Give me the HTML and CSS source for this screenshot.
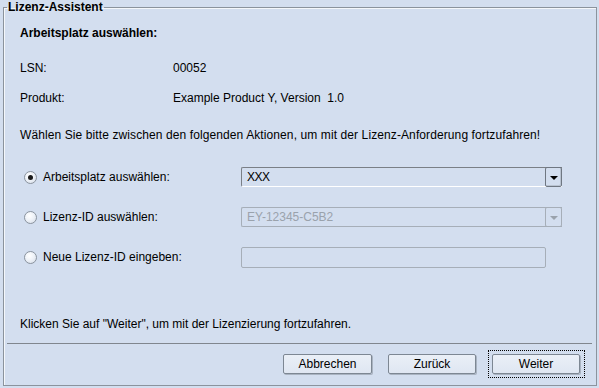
FILE: index.html
```html
<!DOCTYPE html>
<html lang="de">
<head>
  <meta charset="UTF-8" />
  <title>Lizenz-Assistent</title>
  <link rel="stylesheet" href="styles.css">
</head>
<body>

  <fieldset class="wizard">
    <legend>Lizenz-Assistent</legend>

    <div class="content">
      <h2>Arbeitsplatz auswählen:</h2>

      <div class="info">
        <span>LSN:</span>
        <span>00052</span>
        <span>Produkt:</span>
        <span>Example Product Y, Version&nbsp; 1.0</span>
      </div>

      <p class="hint">Wählen Sie bitte zwischen den folgenden Aktionen, um mit der Lizenz-Anforderung fortzufahren!</p>

      <div class="choices">
        <div class="choice">
          <label class="radio"><span class="dot checked"></span>Arbeitsplatz auswählen:</label>
          <div class="combo">
            <span class="combo-text">XXX</span>
            <span class="combo-btn"><span class="arrow"></span></span>
          </div>
        </div>

        <div class="choice">
          <label class="radio"><span class="dot"></span>Lizenz-ID auswählen:</label>
          <div class="combo disabled">
            <span class="combo-text">EY-12345-C5B2</span>
            <span class="combo-btn"><span class="arrow"></span></span>
          </div>
        </div>

        <div class="choice">
          <label class="radio"><span class="dot"></span>Neue Lizenz-ID eingeben:</label>
          <div class="field"></div>
        </div>
      </div>

      <p class="next">Klicken Sie auf "Weiter", um mit der Lizenzierung fortzufahren.</p>
    </div>

    <hr class="sep">

    <div class="buttons">
      <button class="btn">Abbrechen</button>
      <button class="btn">Zurück</button>
      <button class="btn focused">Weiter</button>
    </div>
  </fieldset>

</body>
</html>
```

FILE: styles.css
```css
body {
  margin: 0;
  width: 599px;
  height: 388px;
  background: #d3deef;
  font-family: "Liberation Sans", Arial, sans-serif;
  font-size: 12px;
  line-height: 14px;
  color: #000;
  overflow: hidden;
}

.wizard {
  box-sizing: border-box;
  margin: 0 2px 0 3px;
  padding: 0;
  height: 386px;
  border: 1px solid #8b939d;
  box-shadow: inset 1px 1px 0 #f4f7fb;
}

.wizard legend {
  margin-left: 3px;
  padding: 0 1px;
  font-weight: bold;
  font-size: 12px;
  line-height: 14px;
}

.content {
  padding: 12px 16px 0 16px;
}

h2 {
  margin: 0;
  font-size: 12px;
  line-height: 14px;
  font-weight: bold;
}

.info {
  display: grid;
  grid-template-columns: 153px auto;
  row-gap: 16px;
  margin-top: 21px;
}

.hint {
  margin: 23px 0 0 0;
  letter-spacing: 0.1px;
}

.choices {
  display: flex;
  flex-direction: column;
  gap: 20px;
  margin-top: 25px;
}

.choice {
  display: flex;
  align-items: center;
  height: 20px;
}

.radio {
  display: flex;
  align-items: center;
  width: 221px;
  padding-left: 4px;
  box-sizing: border-box;
}

.dot {
  box-sizing: border-box;
  width: 13px;
  height: 13px;
  margin-right: 6px;
  border: 1px solid #8a939e;
  border-radius: 50%;
  background: radial-gradient(circle at 40% 35%, #ffffff 0%, #eef2f8 45%, #d3dbe6 100%);
  position: relative;
}

.dot.checked::after {
  content: "";
  position: absolute;
  left: 3px;
  top: 3px;
  width: 5px;
  height: 5px;
  border-radius: 50%;
  background: #1a1a1a;
}

.combo {
  box-sizing: border-box;
  width: 321px;
  height: 20px;
  display: flex;
  align-items: center;
  border-top: 1px solid #7a7f86;
  border-left: 1px solid #7a7f86;
  border-bottom: 1px solid #ffffff;
  border-right: 0;
  border-radius: 2px 0 0 2px;
}

.combo-text {
  flex: 1;
  padding-left: 5px;
  letter-spacing: -0.5px;
}

.combo-btn {
  box-sizing: border-box;
  width: 17px;
  height: 20px;
  margin-top: -1px;
  margin-bottom: -1px;
  border: 1px solid #6f7782;
  border-radius: 2px;
  display: flex;
  align-items: center;
  justify-content: center;
  box-shadow: inset -1px -1px 0 #b9c3d1;
}

.arrow {
  width: 0;
  height: 0;
  border-left: 4px solid transparent;
  border-right: 4px solid transparent;
  border-top: 4px solid #000;
  margin-top: 1px;
}

.combo.disabled {
  border: 1px solid #a6aeb8;
  border-right: 0;
}

.combo.disabled .combo-text {
  color: #9aa2ac;
  letter-spacing: 0;
}

.combo.disabled .combo-btn {
  border-color: #a6aeb8;
  box-shadow: none;
}

.combo.disabled .arrow {
  border-top-color: #9aa2ac;
}

.field {
  box-sizing: border-box;
  width: 305px;
  height: 21px;
  border: 1px solid #a6aeb8;
  border-radius: 2px;
}

.next {
  margin: 50px 0 0 0;
}

.sep {
  margin: 12px 4px 0 3px;
  border: 0;
  border-top: 1px solid #80868e;
  height: 0;
}

.buttons {
  display: flex;
  justify-content: flex-end;
  gap: 16px;
  padding: 10px 16px 0 0;
}

.btn {
  position: relative;
  box-sizing: border-box;
  width: 88px;
  height: 20px;
  padding: 0;
  font-family: "Liberation Sans", Arial, sans-serif;
  font-size: 12px;
  color: #000;
  border: 1px solid #7d8793;
  border-radius: 2px;
  background: linear-gradient(#eaeff7, #dfe6f2);
  box-shadow: 1px 1px 0 #a9b3c1;
}

.btn:first-child {
  width: 89px;
}

.btn.focused::after {
  content: "";
  position: absolute;
  left: -5px;
  top: -5px;
  right: -6px;
  bottom: -5px;
  border: 1px dotted #000;
}
```
